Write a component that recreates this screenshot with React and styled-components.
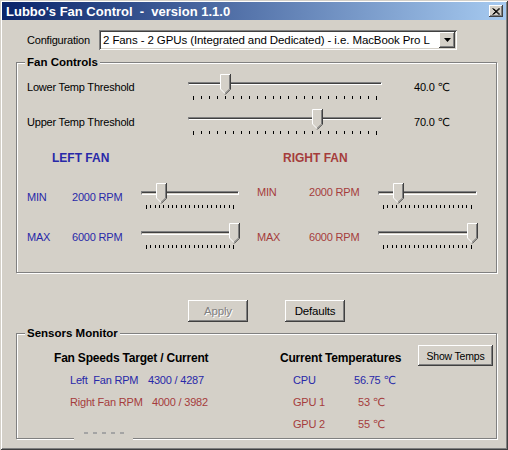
import React from 'react';
import styled, { createGlobalStyle } from 'styled-components';

const GlobalStyle = createGlobalStyle`
  html, body { margin: 0; padding: 0; background: #d4d0c8; }
  body {
    font-family: "Liberation Sans", Arial, "DejaVu Sans", sans-serif;
    font-size: 11px;
    letter-spacing: -0.2px;
    color: #000;
  }
`;

const BLUE = '#2828a8';
const RED = '#a53c3c';
const FACE = '#d4d0c8';

const raised = `box-shadow: inset -1px -1px 0 #404040, inset 1px 1px 0 #fff, inset -2px -2px 0 #808080, inset 2px 2px 0 ${FACE};`;

const Window = styled.div`
  width: 508px;
  height: 450px;
  box-sizing: border-box;
  padding: 2px;
  background: ${FACE};
  box-shadow: inset 1px 1px 0 ${FACE}, inset -1px -1px 0 #404040, inset 2px 2px 0 #fff, inset -2px -2px 0 #808080;
  display: flex;
  flex-direction: column;
`;

const TitleBar = styled.div`
  height: 18px;
  flex: none;
  display: flex;
  align-items: center;
  justify-content: space-between;
  padding: 0 3px 0 4px;
  background: linear-gradient(to right, #0a246a, #a6caf0);
`;

const TitleText = styled.span`
  color: #fff;
  font: bold 13px "Liberation Sans", Arial, sans-serif;
  letter-spacing: 0;
  white-space: pre;
`;

const CloseButton = styled.div`
  width: 14px;
  height: 12px;
  background: ${FACE};
  ${raised}
  display: flex;
  align-items: center;
  justify-content: center;
`;

const Content = styled.div`
  flex: 1;
  display: flex;
  flex-direction: column;
`;

const ConfigRow = styled.div`
  display: flex;
  align-items: center;
  height: 20px;
  margin: 10px 0 0 25px;
`;

const ConfigLabel = styled.span`
  width: 72px;
`;

const Select = styled.div`
  width: 358px;
  height: 20px;
  box-sizing: border-box;
  background: #fff;
  box-shadow: inset 1px 1px 0 #808080, inset -1px -1px 0 #fff, inset 2px 2px 0 #404040, inset -2px -2px 0 ${FACE};
  display: flex;
  align-items: center;
  padding: 2px 2px 2px 4px;
`;

const SelectText = styled.span`
  flex: 1;
  white-space: nowrap;
  font-size: 11.5px;
  letter-spacing: -0.1px;
`;

const SelectArrow = styled.div`
  width: 16px;
  height: 16px;
  flex: none;
  background: ${FACE};
  ${raised}
  display: flex;
  align-items: center;
  justify-content: center;
`;

const GroupBox = styled.div`
  position: relative;
  margin: ${p => p.$top}px 0 0 14px;
  width: 481px;
  height: ${p => p.$height}px;
  box-sizing: border-box;
  border: 1px solid #808080;
  box-shadow: inset 1px 1px 0 #fff, 1px 1px 0 #fff;
  padding: ${p => p.$pad};
  flex: none;
`;

const Legend = styled.span`
  position: absolute;
  top: -7px;
  left: 8px;
  padding: 0 2px;
  background: ${FACE};
  font-weight: bold;
  font-size: 11.5px;
  line-height: 13px;
  letter-spacing: 0;
`;

const ThresholdRow = styled.div`
  display: grid;
  grid-template-columns: 161px 194px auto;
  align-items: center;
  height: 26px;
  margin-top: ${p => p.$top || 0}px;
`;

const SliderWrap = styled.div`
  position: relative;
  width: ${p => p.$width}px;
  height: 26px;
  display: flex;
  flex-direction: column;
`;

const Track = styled.div`
  margin-top: 8px;
  height: 4px;
  box-sizing: border-box;
  background: ${FACE};
  border-top: 1px solid #808080;
  border-left: 1px solid #808080;
  border-bottom: 1px solid #fff;
  border-right: 1px solid #fff;
  box-shadow: inset 0 1px 0 #404040;
`;

const TickRow = styled.div`
  margin-top: ${p => p.$gap}px;
  padding: 0 5px;
  display: flex;
  justify-content: space-between;
  align-items: flex-start;
  height: 4px;
`;

const Tick = styled.span`
  width: 1px;
  height: ${p => (p.$end ? 4 : 3)}px;
  background: #000;
`;

const ThumbBox = styled.div`
  position: absolute;
  top: 0;
  width: 11px;
  height: 21px;
`;

const Value = styled.span`
  white-space: pre;
  padding-left: 32px;
`;

const FanColumns = styled.div`
  display: grid;
  grid-template-columns: 230px auto;
  margin-top: 15px;
`;

const FanColumn = styled.div`
  display: flex;
  flex-direction: column;
  color: ${p => p.$color};
`;

const FanHeader = styled.div`
  height: 16px;
  line-height: 16px;
  padding-left: ${p => p.$indent}px;
  font-weight: bold;
  font-size: 12px;
  letter-spacing: 0;
`;

const FanRow = styled.div`
  display: flex;
  align-items: flex-start;
  height: 26px;
  margin-top: ${p => p.$top}px;
`;

const FanLabel = styled.span`
  width: ${p => p.$width}px;
  flex: none;
  line-height: 13px;
  padding-top: ${p => p.$shift}px;
`;

const FanValue = styled.span`
  width: 69px;
  flex: none;
  line-height: 13px;
  padding-top: ${p => p.$shift}px;
`;

const ButtonRow = styled.div`
  display: flex;
  gap: 37px;
  margin: 27px 0 0 186px;
`;

const Button = styled.div`
  width: ${p => p.$width}px;
  height: ${p => p.$height || 22}px;
  box-sizing: border-box;
  background: ${FACE};
  ${raised}
  display: flex;
  align-items: center;
  justify-content: center;
  font-size: ${p => p.$size || 11.5}px;
  color: ${p => (p.$disabled ? '#808080' : '#000')};
  text-shadow: ${p => (p.$disabled ? '1px 1px 0 #fff' : 'none')};
  flex: none;
`;

const SensorsGrid = styled.div`
  display: grid;
  grid-template-columns: 226px auto;
`;

const SensorColumn = styled.div`
  display: flex;
  flex-direction: column;
`;

const SensorHeading = styled.div`
  height: 23px;
  display: flex;
  align-items: center;
  font-weight: bold;
  font-size: 12px;
  letter-spacing: -0.2px;
`;

const ShowTempsButton = styled(Button)`
  margin-left: auto;
  margin-right: 3px;
  align-self: flex-start;
  margin-top: -1px;
  font-weight: normal;
`;

const SensorRow = styled.div`
  height: 22px;
  display: flex;
  align-items: center;
  padding-left: ${p => p.$indent}px;
  color: ${p => p.$color};
  white-space: pre;
`;

const SensorLabel = styled.span`
  width: ${p => p.$width}px;
  flex: none;
`;

const SensorValue = styled.span`
  padding-left: ${p => p.$shift || 0}px;
`;

const DotsLabel = styled.div`
  position: absolute;
  left: 57px;
  bottom: -2px;
  width: 59px;
  height: 14px;
  background: ${FACE};
  display: flex;
  align-items: center;
  justify-content: center;
  gap: 5px;
`;

const Dot = styled.span`
  width: 4px;
  height: 2px;
  background: #a4a4a4;
`;

function Thumb() {
  return (
    <svg width="11" height="21" viewBox="0 0 11 21">
      <polygon points="0,0 10,0 10,15 5,20 0,15" fill={FACE} />
      <polyline points="0.5,15 0.5,0.5 10,0.5" fill="none" stroke="#fff" strokeWidth="1" />
      <line x1="0.5" y1="15" x2="5" y2="19.5" stroke="#fff" strokeWidth="1" />
      <polyline points="10.5,0 10.5,15.2 5.2,20.5" fill="none" stroke="#404040" strokeWidth="1" />
      <polyline points="9.5,1 9.5,15 5,19.3" fill="none" stroke="#808080" strokeWidth="1" />
    </svg>
  );
}

function Slider({ width, frac, ticks, tickGap = 11 }) {
  const inset = 5;
  const left = inset + frac * (width - 2 * inset) - 5;
  return (
    <SliderWrap $width={width}>
      <Track />
      <TickRow $gap={tickGap}>
        {Array.from({ length: ticks }, (_, i) => (
          <Tick key={i} $end={i === 0 || i === ticks - 1} />
        ))}
      </TickRow>
      <ThumbBox style={{ left: `${left}px` }}>
        <Thumb />
      </ThumbBox>
    </SliderWrap>
  );
}

const fans = [
  {
    name: 'LEFT FAN', color: BLUE, indent: 25, labelWidth: 45, sliderWidth: 98,
    rows: [
      { label: 'MIN', value: '2000 RPM', frac: 0.17, shift: 8, top: 17 },
      { label: 'MAX', value: '6000 RPM', frac: 1, shift: 8, top: 14 },
    ],
  },
  {
    name: 'RIGHT FAN', color: RED, indent: 26, labelWidth: 52, sliderWidth: 99,
    rows: [
      { label: 'MIN', value: '2000 RPM', frac: 0.17, shift: 3, top: 17 },
      { label: 'MAX', value: '6000 RPM', frac: 1, shift: 8, top: 14 },
    ],
  },
];

export default function App() {
  return (
    <>
      <GlobalStyle />
      <Window>
        <TitleBar>
          <TitleText>{"Lubbo's Fan Control  -  version 1.1.0"}</TitleText>
          <CloseButton>
            <svg width="8" height="7" viewBox="0 0 8 7">
              <path d="M0.5 0.5 L7 6.5 M1.5 0.5 L8 6.5 M7 0.5 L0.5 6.5 M8 0.5 L1.5 6.5" stroke="#000" strokeWidth="1" />
            </svg>
          </CloseButton>
        </TitleBar>
        <Content>
          <ConfigRow>
            <ConfigLabel>Configuration</ConfigLabel>
            <Select>
              <SelectText>2 Fans - 2 GPUs (Integrated and Dedicated) - i.e. MacBook Pro L</SelectText>
              <SelectArrow>
                <svg width="7" height="4" viewBox="0 0 7 4">
                  <polygon points="0,0 7,0 3.5,4" fill="#000" />
                </svg>
              </SelectArrow>
            </Select>
          </ConfigRow>

          <GroupBox $top={12} $height={211} $pad="11px 0 0 10px">
            <Legend>Fan Controls</Legend>
            <ThresholdRow>
              <span>Lower Temp Threshold</span>
              <Slider width={194} frac={0.174} ticks={24} tickGap={11} />
              <Value>40.0 ℃</Value>
            </ThresholdRow>
            <ThresholdRow $top={9}>
              <span>Upper Temp Threshold</span>
              <Slider width={194} frac={0.674} ticks={24} tickGap={11} />
              <Value>70.0 ℃</Value>
            </ThresholdRow>
            <FanColumns>
              {fans.map(fan => (
                <FanColumn key={fan.name} $color={fan.color}>
                  <FanHeader $indent={fan.indent}>{fan.name}</FanHeader>
                  {fan.rows.map(r => (
                    <FanRow key={r.label} $top={r.top}>
                      <FanLabel $width={fan.labelWidth} $shift={r.shift}>{r.label}</FanLabel>
                      <FanValue $shift={r.shift}>{r.value}</FanValue>
                      <Slider width={fan.sliderWidth} frac={r.frac} ticks={21} tickGap={10} />
                    </FanRow>
                  ))}
                </FanColumn>
              ))}
            </FanColumns>
          </GroupBox>

          <ButtonRow>
            <Button $width={60} $disabled>Apply</Button>
            <Button $width={60}>Defaults</Button>
          </ButtonRow>

          <GroupBox $top={11} $height={106} $pad="12px 0 0 37px">
            <Legend>Sensors Monitor</Legend>
            <SensorsGrid>
              <SensorColumn>
                <SensorHeading>Fan Speeds Target / Current</SensorHeading>
                <SensorRow $indent={16} $color={BLUE}>
                  <SensorLabel $width={78}>Left  Fan RPM</SensorLabel>
                  <SensorValue>4300 / 4287</SensorValue>
                </SensorRow>
                <SensorRow $indent={16} $color={RED}>
                  <SensorLabel $width={82}>Right Fan RPM</SensorLabel>
                  <SensorValue>4000 / 3982</SensorValue>
                </SensorRow>
              </SensorColumn>
              <SensorColumn>
                <SensorHeading>
                  Current Temperatures
                  <ShowTempsButton $width={75} $height={21} $size={10.5}>Show Temps</ShowTempsButton>
                </SensorHeading>
                <SensorRow $indent={13} $color={BLUE}>
                  <SensorLabel $width={61}>CPU</SensorLabel>
                  <SensorValue>56.75 ℃</SensorValue>
                </SensorRow>
                <SensorRow $indent={13} $color={RED}>
                  <SensorLabel $width={61}>GPU 1</SensorLabel>
                  <SensorValue $shift={4}>53 ℃</SensorValue>
                </SensorRow>
                <SensorRow $indent={13} $color={RED}>
                  <SensorLabel $width={61}>GPU 2</SensorLabel>
                  <SensorValue $shift={4}>55 ℃</SensorValue>
                </SensorRow>
              </SensorColumn>
            </SensorsGrid>
            <DotsLabel>
              <Dot /><Dot /><Dot /><Dot /><Dot />
            </DotsLabel>
          </GroupBox>
        </Content>
      </Window>
    </>
  );
}
